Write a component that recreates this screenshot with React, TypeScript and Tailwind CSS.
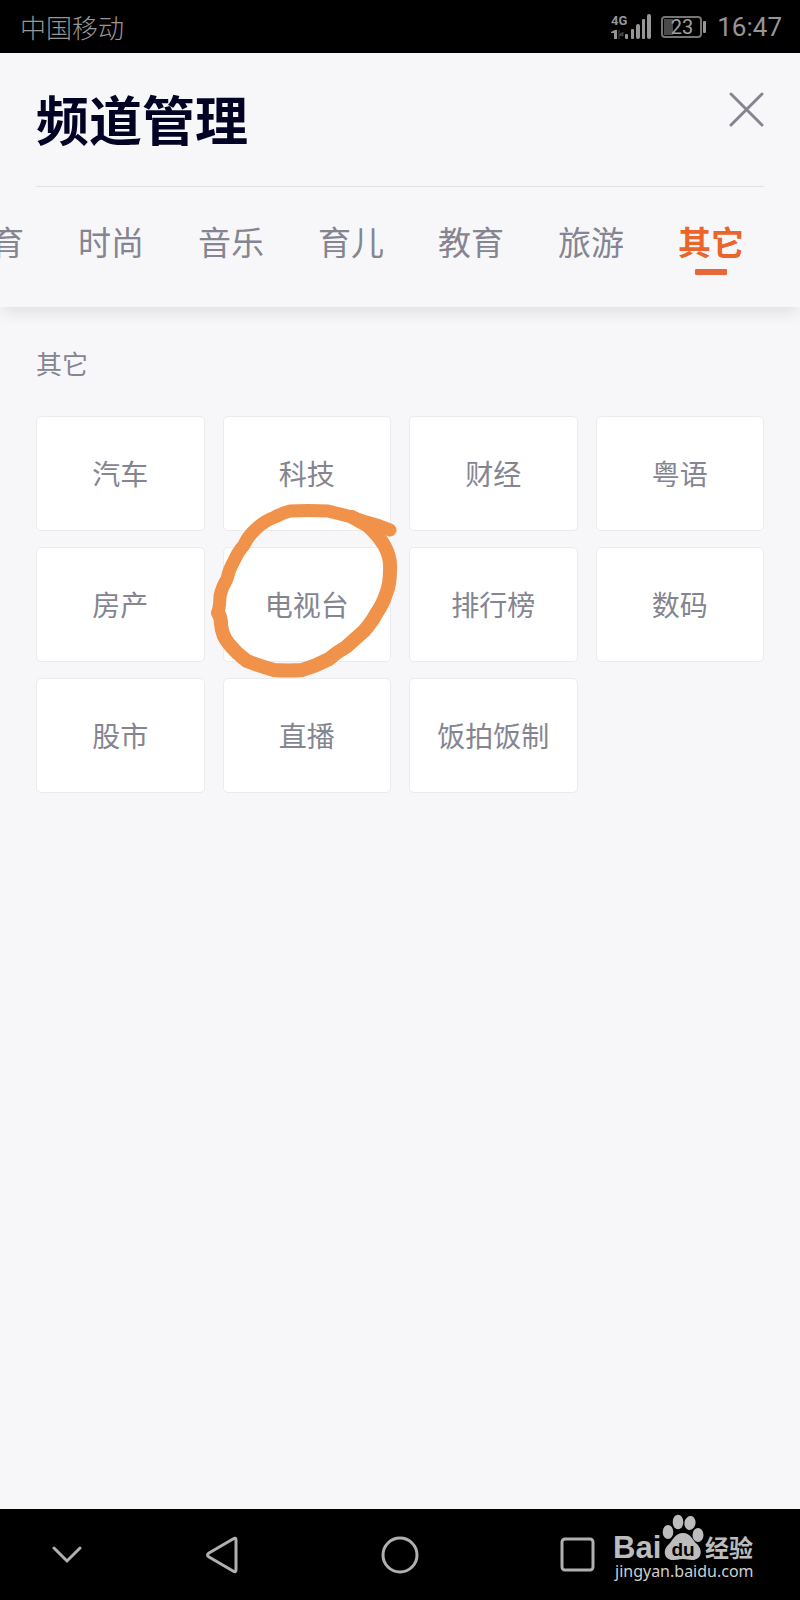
import React from 'react';

interface Tab {
  id: string;
  label: string;
}

const TABS: Tab[] = [
  { id: 'sports', label: '体育' },
  { id: 'fashion', label: '时尚' },
  { id: 'music', label: '音乐' },
  { id: 'parenting', label: '育儿' },
  { id: 'education', label: '教育' },
  { id: 'travel', label: '旅游' },
  { id: 'other', label: '其它' },
];

const CHANNELS = ['汽车', '科技', '财经', '粤语', '房产', '电视台', '排行榜', '数码', '股市', '直播', '饭拍饭制'];

const CIRCLED_CHANNEL = '电视台';

export default function App() {
  const [activeTab, setActiveTab] = React.useState('other');

  return (
    <div className="min-h-screen flex flex-col bg-[#f7f7fa] font-['Noto_Sans_CJK_SC',sans-serif] text-[#858591] overflow-hidden">
      <StatusBar />
      <header className="bg-[#f7f7fa] shadow-[0_8px_14px_-2px_rgba(0,0,0,0.09)]">
        <div className="mx-9 h-[134px] pb-1 flex items-center justify-between border-b border-[#e2e2e6]">
          <h1 className="text-[53px] leading-[60px] font-bold text-[#020224]">频道管理</h1>
          <button type="button" aria-label="关闭" className="mb-4">
            <CloseIcon />
          </button>
        </div>
        <TabBar activeTab={activeTab} onSelect={setActiveTab} />
      </header>
      <main className="flex-1 px-9 pt-[38px]">
        <h2 className="text-[26px] leading-9">其它</h2>
        <div className="mt-[35px] grid grid-cols-4 gap-x-[18px] gap-y-4">
          {CHANNELS.map((channel) => (
            <ChannelCard key={channel} name={channel} circled={channel === CIRCLED_CHANNEL} />
          ))}
        </div>
      </main>
      <NavigationBar />
    </div>
  );
}

const StatusBar: React.FC = () => (
  <div className="h-[53px] pl-5 pr-[18px] flex items-center justify-between bg-black text-[#969696]">
    <span className="text-[26px] leading-8 font-light">中国移动</span>
    <div className="flex items-center gap-[10px]">
      <SignalIcon />
      <BatteryIcon />
      <span className="font-[Roboto,sans-serif] text-[26px] leading-8">16:47</span>
    </div>
  </div>
);

interface TabBarProps {
  activeTab: string;
  onSelect: (id: string) => void;
}

const TabBar: React.FC<TabBarProps> = ({ activeTab, onSelect }) => (
  <nav className="h-[120px] pt-[30px] pr-14 flex justify-end gap-[54px]">
    {TABS.map((tab) => {
      const isActive = tab.id === activeTab;

      return (
        <button
          key={tab.id}
          type="button"
          onClick={() => onSelect(tab.id)}
          className={`shrink-0 flex flex-col items-center self-start text-[33px] leading-[48px] ${isActive ? 'font-bold text-[#eb652b]' : 'font-normal'}`}
        >
          {tab.label}
          {isActive && <span className="mt-1 h-[6px] w-8 rounded-[1px] bg-[#e5673a]" />}
        </button>
      );
    })}
  </nav>
);

interface ChannelCardProps {
  name: string;
  circled: boolean;
}

const ChannelCard: React.FC<ChannelCardProps> = ({ name, circled }) => (
  <div className="relative">
    <button
      type="button"
      className="w-full h-[115px] pb-[2px] flex items-center justify-center rounded-[5px] border border-[#ebebee] bg-white text-[28px] leading-10"
    >
      {name}
    </button>
    {circled && <HandDrawnCircle />}
  </div>
);

const HandDrawnCircle: React.FC = () => (
  <svg
    className="absolute z-10 -left-[13px] -top-[47px] pointer-events-none"
    width="190"
    height="180"
    viewBox="210 500 190 180"
    fill="none"
    stroke="#f0924a"
    strokeWidth="14"
    strokeLinecap="round"
    strokeLinejoin="round"
  >
    <path
      strokeWidth="13"
      d="M390 530Q376 524 363 521Q357 519 352 517Q340 514 328 511Q308 510 290 511Q282 513 275 517Q264 521 256 529Q248 536 244 545Q237 553 234 561Q229 569 227 579Q222 587 220 596Q220 605 218 613"
    />
    <path d="M218 613Q221 617 221 624Q222 636 229 644Q237 654 247 661Q260 666 274 670Q288 671 302 670Q316 666 329 659Q337 652 346 647Q355 639 364 631Q372 622 376 614Q383 604 386 594Q390 585 390 570Q391 557 384 545Q378 535 368 526L352 517" />
    <path strokeWidth="10" d="M352 516L366 524L378 530" />
  </svg>
);

const CloseIcon: React.FC = () => (
  <svg width="36" height="36" viewBox="0 0 36 36" fill="none" stroke="#858591" strokeWidth="3" strokeLinecap="round">
    <path d="M3 2L34 33M34 2L3 33" />
  </svg>
);

const SignalIcon: React.FC = () => (
  <svg width="40" height="28" viewBox="0 0 40 28" fill="#969696">
    <text x="0" y="12" fontFamily="Liberation Sans Narrow, Roboto, sans-serif" fontSize="13" fontWeight="700">
      4G
    </text>
    <path d="M0 19L4 17H6V26H3V20H0Z" />
    <path d="M8 17v9M8 22l4-3v4z" fill="#444" stroke="#444" />
    <rect x="14" y="21" width="3" height="5" rx="1" />
    <rect x="20" y="16" width="3" height="10" rx="1" />
    <rect x="25" y="11" width="4" height="15" rx="2" />
    <rect x="31" y="6" width="3" height="20" rx="1" />
    <rect x="36" y="1" width="4" height="25" rx="2" />
  </svg>
);

const BatteryIcon: React.FC = () => (
  <svg width="46" height="22" viewBox="0 0 46 22" fill="none">
    <rect x="1" y="1" width="39" height="20" rx="3" stroke="#757575" strokeWidth="2" />
    <rect x="3" y="3" width="9" height="16" fill="#4a4a4a" />
    <rect x="42" y="5" width="3" height="12" rx="1" fill="#969696" />
    <text x="21" y="18" textAnchor="middle" fontFamily="Roboto, sans-serif" fontSize="20" fill="#a0a0a0">
      23
    </text>
  </svg>
);

const NavigationBar: React.FC = () => (
  <footer className="relative h-[91px] flex items-center bg-black text-[#b0b0b0]">
    <button type="button" aria-label="收起" className="w-[133px] flex justify-center">
      <svg width="30" height="18" viewBox="0 0 30 18" fill="none" stroke="currentColor" strokeWidth="3" strokeLinecap="round">
        <path d="M2 2L15 15L28 2" />
      </svg>
    </button>
    <button type="button" aria-label="返回" className="flex-1 flex justify-center">
      <svg width="36" height="38" viewBox="0 0 36 38" fill="none" stroke="currentColor" strokeWidth="3" strokeLinejoin="round">
        <path d="M32 4Q32 1 29 3L5 17Q2 19 5 21L29 35Q32 37 32 34Z" />
      </svg>
    </button>
    <button type="button" aria-label="主页" className="flex-1 flex justify-center">
      <svg width="38" height="38" viewBox="0 0 38 38" fill="none" stroke="currentColor" strokeWidth="3">
        <circle cx="19" cy="19" r="17" />
      </svg>
    </button>
    <button type="button" aria-label="最近任务" className="flex-1 flex justify-center">
      <svg width="36" height="36" viewBox="0 0 36 36" fill="none" stroke="currentColor" strokeWidth="3">
        <rect x="2" y="2" width="31" height="31" rx="3" />
      </svg>
    </button>
    <div className="w-[133px]" />
    <Watermark />
  </footer>
);

const Watermark: React.FC = () => (
  <a href="#jingyan" className="absolute right-10 top-1" aria-label="Baidu 经验">
    <svg width="148" height="80" viewBox="612 1513 148 80" fill="#bcbcbc">
      <text x="613" y="1558" fontFamily="Liberation Sans, sans-serif" fontSize="31" fontWeight="700">
        Bai
      </text>
      <ellipse cx="668" cy="1532" rx="5.300" ry="7" />
      <ellipse cx="678" cy="1522" rx="5.300" ry="7.300" />
      <ellipse cx="690" cy="1523" rx="5.500" ry="7" transform="rotate(10 690 1523)" />
      <ellipse cx="698" cy="1535" rx="5.500" ry="7" />
      <path d="M683 1533C675 1533 673 1540 669 1544C662 1550 664 1560 673 1560C678 1560 680 1559 683 1559C686 1559 689 1560 692 1560C702 1560 703 1550 697 1544C692 1540 691 1533 683 1533Z" />
      <text x="683" y="1556" textAnchor="middle" fontFamily="Liberation Sans, sans-serif" fontSize="19" fontWeight="700" fill="#000">
        du
      </text>
      <text x="705" y="1557" fontFamily="Noto Sans CJK SC, sans-serif" fontSize="24" fontWeight="700">
        经验
      </text>
      <text x="615" y="1577" fontFamily="Noto Sans, sans-serif" fontSize="16" fill="#cfcfcf">
        jingyan.baidu.com
      </text>
    </svg>
  </a>
);
